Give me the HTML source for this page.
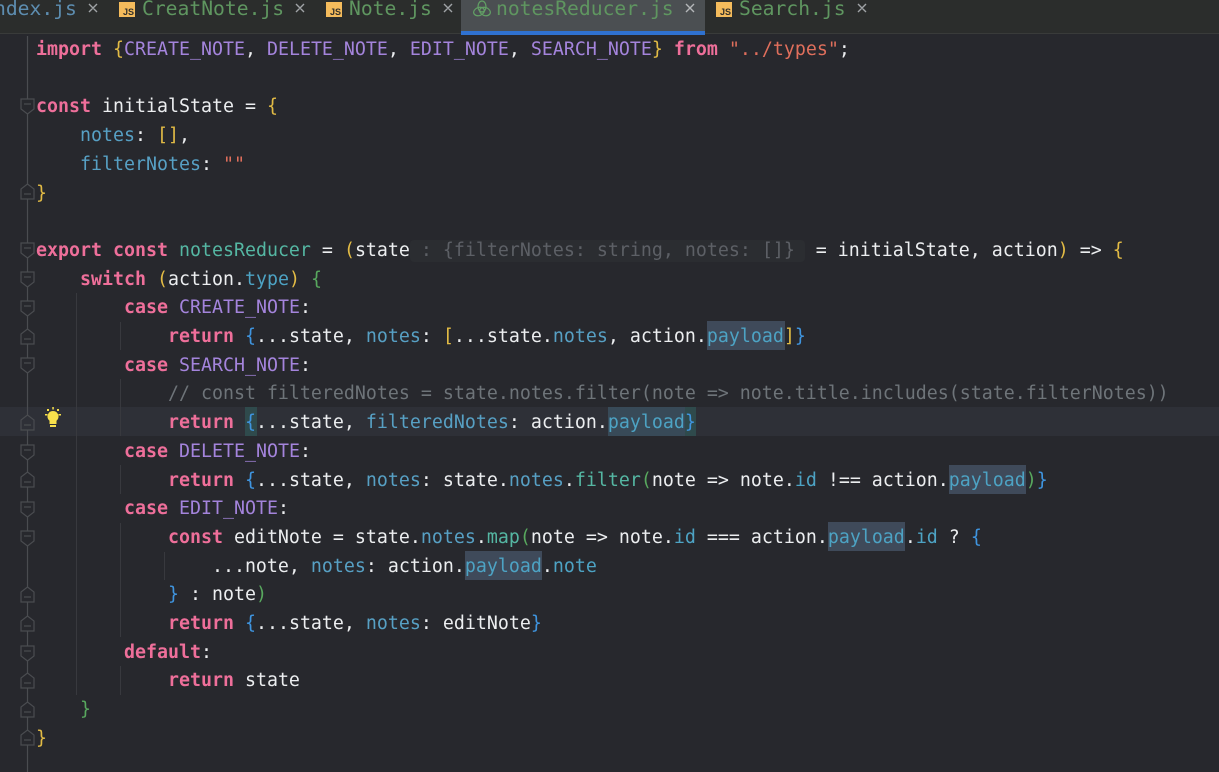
<!DOCTYPE html>
<html><head><meta charset="utf-8"><style>
html,body{margin:0;padding:0;background:#27282d}
#r{position:relative;width:1219px;height:772px;overflow:hidden;background:#27282d}
#tabs{position:absolute;left:0;top:0;width:1219px;height:33px;background:#2b2d2c;border-bottom:1px solid #393b3a}
#act{position:absolute;left:461px;top:0;width:244px;height:31px;background:#4b4f52}
#bar{position:absolute;left:461px;top:31px;width:244px;height:4px;background:#2f71d0}
.t{position:absolute;top:-3px;font:19.68px/24px "DejaVu Sans Mono","Liberation Mono",monospace;color:#5f9660;white-space:pre}
.j{position:absolute;top:2px;width:16px;height:15px;background:#f4bb5c}
.j span{position:absolute;right:1px;bottom:0;font:bold 9px/10px "Liberation Sans",sans-serif;color:#33302a}
.h{position:absolute;height:29px;background:#3f4a5a}
#cur{position:absolute;left:0;top:407px;width:1219px;height:29px;background:#2e3037}
pre{position:absolute;left:36px;top:36px;margin:0;font:18.27px/28.7px "DejaVu Sans Mono","Liberation Mono",monospace;color:#eceef0;font-kerning:none}
b{color:#ee6f9a;font-weight:bold}
.c{color:#a484dc}.y{color:#e2bb45}.f{color:#4da3c4}.g{color:#58a85e}.u{color:#3f95e0}
.s{color:#e06f5c}.m{color:#6e7479}.n{color:#55b7a3}.p{color:#57a0c4}
#hint{position:absolute;left:410px;top:240px;width:395px;height:22px;background:#2b2d31;border-radius:4px}
#ht{color:#5d6066;margin-right:-1px}
</style></head><body><div id="r">
<div id="tabs"></div><div id="act"></div><div id="bar"></div>
<span class="t" style="left:-6px;color:#5d8db0">ndex.js</span>
<div class="j" style="left:119px"><span>JS</span></div><span class="t" style="left:142px">CreatNote.js</span>
<div class="j" style="left:326px"><span>JS</span></div><span class="t" style="left:349px">Note.js</span>
<svg style="position:absolute;left:0;top:0" width="900" height="20" fill="none" stroke="#a0a3a6" stroke-width="1.4">
<path d="M89 4L97 12M97 4L89 12M296 4L304 12M304 4L296 12M444 4L452 12M452 4L444 12M858 4L866 12M866 4L858 12"/>
<path d="M686 4L694 12M694 4L686 12" stroke="#b4b7b9"/>
</svg>
<svg style="position:absolute;left:473px;top:0" width="20" height="20" fill="none" stroke="#62a065" stroke-width="1.2"><ellipse cx="9" cy="6.500" rx="4" ry="5.500"/><ellipse cx="6" cy="11.500" rx="5.500" ry="4" transform="rotate(-20 6 11.500)"/><ellipse cx="12" cy="11.500" rx="5.500" ry="4" transform="rotate(20 12 11.500)"/></svg>
<span class="t" style="left:496px">notesReducer.js</span>
<div class="j" style="left:716px"><span>JS</span></div><span class="t" style="left:739px">Search.js</span>

<div id="cur"></div>
<div id="hint"></div>
<div class="h" style="left:707px;top:321px;width:78px"></div>
<div class="h" style="left:608px;top:407px;width:77px;background:#384a58"></div>
<div class="h" style="left:685px;top:407px;width:11px;background:#2f4a4c"></div>
<div class="h" style="left:245px;top:407px;width:12px;background:#2f4a4c"></div>
<div class="h" style="left:949px;top:465px;width:77px"></div>
<div class="h" style="left:828px;top:522px;width:77px"></div>
<div class="h" style="left:465px;top:551px;width:77px"></div>

<svg style="position:absolute;left:0;top:0" width="200" height="772" fill="none" stroke="#4a4c50" stroke-width="1.2">
<path d="M27.500 36V772"/>
<path d="M76.500 293V695M120.500 322V350M120.500 379V436M120.500 465V494M120.500 523V637M120.500 666V695M164.500 552V580" stroke="#38393e" stroke-width="1"/>
<path d="M21 99H34V109L27.500 114L21 109ZM24 104H31" fill="#27282d"/>
<path d="M21 199H34V189L27.500 184L21 189ZM24 194H31" fill="#27282d"/>
<path d="M21 243H34V253L27.500 258L21 253ZM24 248H31" fill="#27282d"/>
<path d="M21 272H34V282L27.500 287L21 282ZM24 277H31" fill="#27282d"/>
<path d="M21 301H34V311L27.500 316L21 311ZM24 306H31" fill="#27282d"/>
<path d="M21 344H34V334L27.500 329L21 334ZM24 339H31" fill="#27282d"/>
<path d="M21 358H34V368L27.500 373L21 368ZM24 363H31" fill="#27282d"/>
<path d="M21 430H34V420L27.500 415L21 420ZM24 425H31" fill="#2e3037"/>
<path d="M21 445H34V455L27.500 460L21 455ZM24 450H31" fill="#27282d"/>
<path d="M21 487H34V477L27.500 472L21 477ZM24 482H31" fill="#27282d"/>
<path d="M21 502H34V512L27.500 517L21 512ZM24 507H31" fill="#27282d"/>
<path d="M21 531H34V541L27.500 546L21 541ZM24 536H31" fill="#27282d"/>
<path d="M21 602H34V592L27.500 587L21 592ZM24 597H31" fill="#27282d"/>
<path d="M21 631H34V621L27.500 616L21 621ZM24 626H31" fill="#27282d"/>
<path d="M21 646H34V656L27.500 661L21 656ZM24 651H31" fill="#27282d"/>
<path d="M21 688H34V678L27.500 673L21 678ZM24 683H31" fill="#27282d"/>
<path d="M21 717H34V707L27.500 702L21 707ZM24 712H31" fill="#27282d"/>
<path d="M21 745H34V735L27.500 730L21 735ZM24 740H31" fill="#27282d"/>
<g stroke="none" fill="#f7e04b"><path d="M53 411a5.500 5.500 0 0 1 3.500 9.700V424H49.500V420.700A5.500 5.500 0 0 1 53 411Z"/><rect x="50" y="425" width="6" height="2"/><rect x="52.300" y="407" width="1.500" height="2.500"/><rect x="45" y="414" width="2.500" height="1.500"/><rect x="58.500" y="414" width="2.500" height="1.500"/><rect x="47" y="409" width="2" height="2"/><rect x="57" y="409" width="2" height="2"/></g>
</svg>

<pre><b>import</b> <span class="y">{</span><span class="c">CREATE_NOTE</span>, <span class="c">DELETE_NOTE</span>, <span class="c">EDIT_NOTE</span>, <span class="c">SEARCH_NOTE</span><span class="y">}</span> <b>from</b> <span class="s">"../types"</span>;

<b>const</b> initialState = <span class="y">{</span>
    <span class="p">notes</span>: <span class="y">[]</span>,
    <span class="p">filterNotes</span>: <span class="s">""</span>
<span class="y">}</span>

<b>export</b> <b>const</b> <span class="n">notesReducer</span> = <span class="y">(</span>state<span id="ht"> : {filterNotes: string, notes: []} </span> = initialState, action<span class="y">)</span> =&gt; <span class="y">{</span>
    <b>switch</b> <span class="y">(</span>action.<span class="f">type</span><span class="y">)</span> <span class="g">{</span>
        <b>case</b> <span class="c">CREATE_NOTE</span>:
            <b>return</b> <span class="u">{</span>...state, <span class="p">notes</span>: <span class="y">[</span>...state.<span class="p">notes</span>, action.<span class="f">payload</span><span class="y">]</span><span class="u">}</span>
        <b>case</b> <span class="c">SEARCH_NOTE</span>:
            <span class="m">// const filteredNotes = state.notes.filter(note =&gt; note.title.includes(state.filterNotes))</span>
            <b>return</b> <span class="u">{</span>...state, <span class="p">filteredNotes</span>: action.<span class="f">payload</span><span class="u">}</span>
        <b>case</b> <span class="c">DELETE_NOTE</span>:
            <b>return</b> <span class="u">{</span>...state, <span class="p">notes</span>: state.<span class="p">notes</span>.<span class="n">filter</span><span class="g">(</span>note =&gt; note.<span class="f">id</span> !== action.<span class="f">payload</span><span class="g">)</span><span class="u">}</span>
        <b>case</b> <span class="c">EDIT_NOTE</span>:
            <b>const</b> editNote = state.<span class="p">notes</span>.<span class="n">map</span><span class="g">(</span>note =&gt; note.<span class="f">id</span> === action.<span class="f">payload</span>.<span class="f">id</span> ? <span class="u">{</span>
                ...note, <span class="p">notes</span>: action.<span class="f">payload</span>.<span class="f">note</span>
            <span class="u">}</span> : note<span class="g">)</span>
            <b>return</b> <span class="u">{</span>...state, <span class="p">notes</span>: editNote<span class="u">}</span>
        <b>default</b>:
            <b>return</b> state
    <span class="g">}</span>
<span class="y">}</span></pre>
</div></body></html>
